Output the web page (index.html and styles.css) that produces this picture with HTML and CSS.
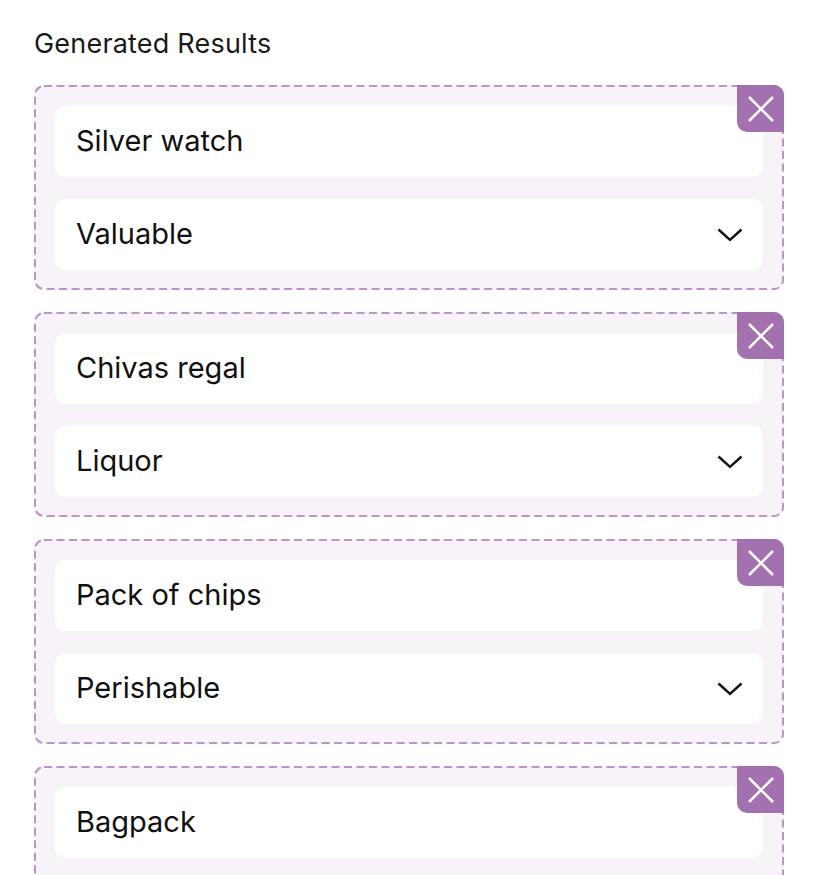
FILE: index.html
```html
<!DOCTYPE html>
<html>
<head>
<meta charset="utf-8">
<link rel="stylesheet" href="styles.css">
</head>
<body>
<div class="page">
  <h2 class="title">Generated Results</h2>
  <div class="list">
    <div class="card">
      <svg class="dash" aria-hidden="true"><rect x="1" y="1" rx="9" ry="9"/></svg>
      <div class="field">Silver watch</div>
      <div class="field select"><span>Valuable</span><svg class="chev" viewBox="0 0 26 14" width="26" height="14"><path d="M1.5 1.5 L13 12 L24.5 1.5" stroke="#111" stroke-width="2.4" fill="none"/></svg></div>
      <button class="close"><svg viewBox="0 0 30 30" width="30" height="30"><path d="M3 3 L27 27 M27 3 L3 27" stroke="#fff" stroke-width="2.6" fill="none"/></svg></button>
    </div>
    <div class="card">
      <svg class="dash" aria-hidden="true"><rect x="1" y="1" rx="9" ry="9"/></svg>
      <div class="field">Chivas regal</div>
      <div class="field select"><span>Liquor</span><svg class="chev" viewBox="0 0 26 14" width="26" height="14"><path d="M1.5 1.5 L13 12 L24.5 1.5" stroke="#111" stroke-width="2.4" fill="none"/></svg></div>
      <button class="close"><svg viewBox="0 0 30 30" width="30" height="30"><path d="M3 3 L27 27 M27 3 L3 27" stroke="#fff" stroke-width="2.6" fill="none"/></svg></button>
    </div>
    <div class="card">
      <svg class="dash" aria-hidden="true"><rect x="1" y="1" rx="9" ry="9"/></svg>
      <div class="field">Pack of chips</div>
      <div class="field select"><span>Perishable</span><svg class="chev" viewBox="0 0 26 14" width="26" height="14"><path d="M1.5 1.5 L13 12 L24.5 1.5" stroke="#111" stroke-width="2.4" fill="none"/></svg></div>
      <button class="close"><svg viewBox="0 0 30 30" width="30" height="30"><path d="M3 3 L27 27 M27 3 L3 27" stroke="#fff" stroke-width="2.6" fill="none"/></svg></button>
    </div>
    <div class="card">
      <svg class="dash" aria-hidden="true"><rect x="1" y="1" rx="9" ry="9"/></svg>
      <div class="field">Bagpack</div>
      <div class="field select"><span></span><svg class="chev" viewBox="0 0 26 14" width="26" height="14"><path d="M1.5 1.5 L13 12 L24.5 1.5" stroke="#111" stroke-width="2.4" fill="none"/></svg></div>
      <button class="close"><svg viewBox="0 0 30 30" width="30" height="30"><path d="M3 3 L27 27 M27 3 L3 27" stroke="#fff" stroke-width="2.6" fill="none"/></svg></button>
    </div>
  </div>
</div>
</body>
</html>
```

FILE: styles.css
```css
html, body {
  margin: 0;
  padding: 0;
  background: #fff;
}
body {
  font-family: Inter, "Liberation Sans", sans-serif;
  color: #111;
  overflow: hidden;
  height: 875px;
}
.page {
  padding: 26px 34px 0 34px;
}
.title {
  margin: 0 0 23px 0;
  font-size: 27px;
  font-weight: 400;
  letter-spacing: 0.2px;
  line-height: 36px;
  color: #1a1a1a;
}
.list {
  display: flex;
  flex-direction: column;
  gap: 22px;
}
.card {
  position: relative;
  background: #f8f3f8;
  border-radius: 10px;
  padding: 21px 21px 20px 21px;
  display: flex;
  flex-direction: column;
  gap: 22px;
}
.dash {
  position: absolute;
  inset: 0;
  width: 100%;
  height: 100%;
  pointer-events: none;
  overflow: visible;
}
.dash rect {
  width: calc(100% - 2px);
  height: calc(100% - 2px);
  fill: none;
  stroke: #be92cb;
  stroke-width: 2;
  stroke-dasharray: 8 4.5;
}
.close {
  position: absolute;
  top: 0;
  right: 0;
  width: 47px;
  height: 47px;
  border: none;
  padding: 0;
  background: #a370b0;
  border-radius: 0 10px 0 10px;
  display: flex;
  align-items: center;
  justify-content: center;
}
.field {
  position: relative;
  box-sizing: border-box;
  background: #fff;
  border-radius: 10px;
  height: 71px;
  padding: 0 21px 3px 21px;
  display: flex;
  align-items: center;
  font-size: 29px;
  color: #111;
}
.select {
  justify-content: space-between;
}
.chev {
  margin-right: -1px;
  margin-top: 3px;
}
```
